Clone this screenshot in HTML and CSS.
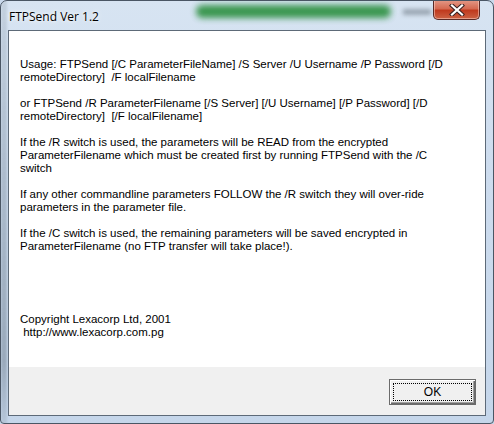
FILE: index.html
```html
<!DOCTYPE html>
<html>
<head>
<meta charset="utf-8">
<link rel="stylesheet" href="styles.css">
</head>
<body>
<div class="window">
  <div class="glass">
    <div class="blur-green"></div>
    <div class="blur-gray"></div>
    <div class="blur-streak"></div>
  </div>
  <div class="titlebar">
    <span class="title">FTPSend Ver 1.2</span>
    <div class="close">
      <svg width="18" height="12" viewBox="0 0 18 12">
        <path d="M4 1.5 L14 10.5 M14 1.5 L4 10.5" stroke="#3a2020" stroke-width="4.2" stroke-linecap="square" fill="none"/>
        <path d="M4 1.5 L14 10.5 M14 1.5 L4 10.5" stroke="#ffffff" stroke-width="2.2" stroke-linecap="square" fill="none"/>
      </svg>
    </div>
  </div>
  <div class="client">
    <div class="content">
      <p>Usage: FTPSend [/C ParameterFileName] /S Server /U Username /P Password [/D<br>remoteDirectory]&nbsp; /F localFilename</p>
      <p>or FTPSend /R ParameterFilename [/S Server] [/U Username] [/P Password] [/D<br>remoteDirectory]&nbsp; [/F localFilename]</p>
      <p>If the /R switch is used, the parameters will be READ from the encrypted<br>ParameterFilename which must be created first by running FTPSend with the /C<br>switch</p>
      <p>If any other commandline parameters FOLLOW the /R switch they will over-ride<br>parameters in the parameter file.</p>
      <p>If the /C switch is used, the remaining parameters will be saved encrypted in<br>ParameterFilename (no FTP transfer will take place!).</p>
      <p class="copy">Copyright Lexacorp Ltd, 2001<br>&nbsp;http://www.lexacorp.com.pg</p>
    </div>
    <div class="footer">
      <button class="ok"><span class="focus">OK</span></button>
    </div>
  </div>
</div>
</body>
</html>
```
FILE: styles.css
```css
html, body {
  margin: 0;
  padding: 0;
  width: 494px;
  height: 424px;
  overflow: hidden;
  background: #c9d9ec;
}
.window {
  position: relative;
  width: 494px;
  height: 424px;
  box-sizing: border-box;
  border: 1px solid #4a5664;
  border-radius: 7px 7px 4px 4px;
  background: linear-gradient(180deg, #d7e4f2 0%, #cddcee 40%, #c5d6ea 100%);
  padding: 0 7px 7px 7px;
  display: flex;
  flex-direction: column;
  overflow: hidden;
}
.glass {
  position: absolute;
  inset: 0;
  pointer-events: none;
}
.blur-green {
  position: absolute;
  left: 195px;
  top: 4px;
  width: 195px;
  height: 13px;
  border-radius: 6px;
  background: #2a8f3e;
  opacity: 0.9;
  filter: blur(3px);
}
.blur-gray {
  position: absolute;
  left: 402px;
  top: 8px;
  width: 28px;
  height: 6px;
  background: #9aa6b2;
  filter: blur(2px);
}
.blur-streak {
  position: absolute;
  left: 0;
  top: 0;
  width: 6px;
  height: 424px;
  background: linear-gradient(180deg, rgba(120,135,150,0.2), rgba(110,125,140,0.5) 85%, rgba(150,165,180,0.3));
  filter: blur(1px);
}
.titlebar {
  position: relative;
  height: 29px;
  flex: none;
}
.title {
  position: absolute;
  left: 1px;
  top: 7px;
  font-family: "Segoe UI", "Open Sans", "Noto Sans", sans-serif;
  font-size: 12px;
  color: #000;
  text-shadow: 0 0 6px rgba(255,255,255,0.9), 0 0 3px rgba(255,255,255,0.9);
}
.close {
  position: absolute;
  right: 6px;
  top: -1px;
  width: 47px;
  height: 20px;
  box-sizing: border-box;
  border: 1px solid #5a2a26;
  border-top: none;
  border-radius: 0 0 5px 5px;
  background: linear-gradient(180deg, #e49a88 0%, #d56a52 45%, #c03a1e 55%, #cc6244 100%);
  box-shadow: inset 0 0 0 1px rgba(255,220,210,0.5);
  display: flex;
  align-items: center;
  justify-content: center;
}
.client {
  flex: 1;
  display: flex;
  flex-direction: column;
  border: 1px solid #5d6a78;
  background: #f0f0f0;
}
.content {
  background: #fff;
  height: 336px;
  box-sizing: border-box;
  padding: 27px 0 0 11px;
  font-family: "Liberation Sans", Arial, sans-serif;
  font-size: 11.5px;
  line-height: 13px;
  color: #000;
  white-space: nowrap;
}
.content p {
  margin: 0 0 13px 0;
}
.content p.copy {
  margin-top: 60px;
}
.footer {
  flex: 1;
  display: flex;
  justify-content: flex-end;
  align-items: flex-start;
  padding: 12px 9px 0 0;
}
.ok {
  width: 87px;
  height: 26px;
  box-sizing: border-box;
  border: 1px solid #6b6b6b;
  background: #f0f0f0;
  box-shadow: inset 1px 1px 0 #ffffff, inset -1px -1px 0 #6b6b6b, inset -2px -2px 0 #a0a0a0;
  padding: 3px;
  font-family: "Liberation Sans", Arial, sans-serif;
  font-size: 12px;
  color: #000;
  display: flex;
}
.focus {
  flex: 1;
  border: 1px dotted #000;
  display: flex;
  align-items: center;
  justify-content: center;
}
```
